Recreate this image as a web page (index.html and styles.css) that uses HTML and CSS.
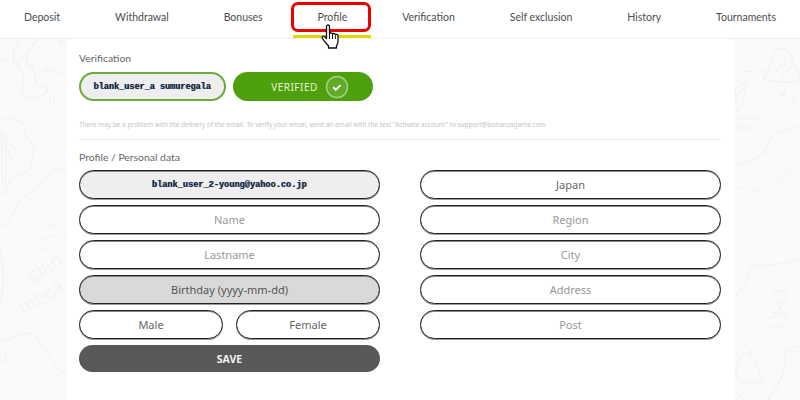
FILE: index.html
```html
<!DOCTYPE html>
<html lang="en">
<head>
<meta charset="utf-8">
<title>Profile</title>
<link rel="stylesheet" href="styles.css">
</head>
<body>
<nav class="tabs">
  <a class="tab">Deposit</a>
  <a class="tab">Withdrawal</a>
  <a class="tab">Bonuses</a>
  <a class="tab tab-active">Profile</a>
  <a class="tab">Verification</a>
  <a class="tab">Self exclusion</a>
  <a class="tab">History</a>
  <a class="tab">Tournaments</a>
</nav>
<div class="stage">
  <svg class="map map-left" width="70" height="362" viewBox="0 0 210 1086" aria-hidden="true">
    <g class="map-lines">
      <path d="M60 5C40 30 30 60 50 85C70 100 80 130 65 150C60 175 90 190 120 175C150 165 150 140 120 145C100 140 110 110 100 95C80 80 70 60 90 35C100 10 120 0 130 0"/>
      <ellipse cx="155" cy="187" rx="6" ry="14"/>
      <ellipse cx="186" cy="13" rx="9" ry="6"/>
      <rect x="63" y="45" width="15" height="15"/>
      <ellipse cx="150" cy="92" rx="12" ry="6"/>
      <path class="dash" d="M0 65L190 110"/>
      <path d="M0 250C30 230 50 240 55 255C70 250 85 270 70 290C100 310 110 340 95 360C100 410 50 410 30 420C25 450 15 470 0 470"/>
      <path d="M0 280L50 340M20 290L15 450M0 320L40 370M0 290L30 350M8 300L5 440"/>
      <path d="M0 570C40 550 40 500 70 480C100 460 130 420 160 395C180 390 190 400 210 395"/>
      <path d="M0 910C50 900 80 870 110 900C130 930 150 960 180 1000L210 1010"/>
      <path d="M0 960C10 980 20 970 15 945"/>
      <path d="M0 640C15 700 10 760 0 800"/>
      <path class="dash" d="M85 655L200 600M110 605L190 590M150 570L185 550"/>
    </g>
    <g class="map-text">
      <text x="95" y="735" transform="rotate(-30 95 735)">gian</text>
      <text x="70" y="830" transform="rotate(-30 70 830)">meca</text>
    </g>
  </svg>
  <svg class="map map-right" width="70" height="362" viewBox="0 0 210 1086" aria-hidden="true">
    <g class="map-lines">
      <path class="dash" d="M0 100L100 100"/>
      <path d="M100 125C120 90 130 60 135 40C150 20 190 40 185 70C200 90 210 110 210 125C180 140 140 130 100 125Z"/>
      <path d="M130 110L170 60M150 120L190 80"/>
      <path d="M145 155L170 180M170 155L145 180"/>
      <path class="dash" d="M185 170L210 215M210 360C190 400 150 440 80 458C50 460 30 450 0 430"/>
      <path d="M0 385C50 370 110 360 115 310C130 280 170 280 210 265"/>
      <path d="M20 220L15 150L50 130L35 200ZM15 180L40 150"/>
      <path d="M0 790C40 750 60 720 70 680C120 690 170 670 210 665"/>
      <path d="M135 775C130 755 170 750 170 775C165 790 155 790 152 815L175 825H130L148 815C150 795 145 785 135 775Z"/>
      <path class="dash" d="M0 880C30 890 60 930 65 950"/>
      <path d="M20 1020C10 980 40 930 60 950C80 970 85 1000 100 1030C70 1040 40 1035 20 1020Z"/>
      <path d="M115 1086C140 1040 170 1010 165 950C180 925 195 925 210 925"/>
      <path d="M15 1060L45 1085M45 1060L15 1085"/>
    </g>
    <g class="map-text map-text-small">
      <text x="14" y="245">rrocoas</text>
      <text x="14" y="275">oloos</text>
      <text x="112" y="842">ɔooɔɔs</text>
      <text x="112" y="872">ɔɔoos</text>
    </g>
  </svg>
  <main class="panel">
    <h2 class="label">Verification</h2>
    <div class="verify-row">
      <div class="pill pill-email"><span class="masked">blank_user_a sumuregala</span></div>
      <div class="verified">VERIFIED
        <svg class="check" width="24" height="24" viewBox="0 0 24 24"><circle cx="12" cy="12" r="10.500" fill="#5fab26" stroke="#a6cf8b" stroke-width="1.500"/><path d="M8.200 12.300l2.600 2.400 4.800-4.600" fill="none" stroke="#fff" stroke-width="2"/></svg>
      </div>
    </div>
    <p class="hint">There may be a problem with the delivery of the email. To verify your email, send an email with the text "Activate account" to support@bonanzagame.com</p>
    <h2 class="label label-profile">Profile / Personal data</h2>
    <div class="columns">
      <div class="col">
        <div class="pill pill-readonly"><span class="masked masked-long">blank_user_2-young@yahoo.co.jp</span></div>
        <div class="pill ph">Name</div>
        <div class="pill ph">Lastname</div>
        <div class="pill pill-date">Birthday (yyyy-mm-dd)</div>
        <div class="gender">
          <div class="pill val">Male</div>
          <div class="pill val">Female</div>
        </div>
        <div class="save">SAVE</div>
      </div>
      <div class="col">
        <div class="pill val">Japan</div>
        <div class="pill ph">Region</div>
        <div class="pill ph">City</div>
        <div class="pill ph">Address</div>
        <div class="pill ph">Post</div>
      </div>
    </div>
    <h2 class="label label-next">Change password</h2>
  </main>
</div>
<div class="marker"></div>
<svg class="hand" width="20" height="26" viewBox="0 0 20 26"><path d="M5.500 2.500c0-2 3-2 3 0v7.200c.6-1.200 2.800-1 3 .4.700-1 2.700-.7 2.900.6.800-.8 2.600-.3 2.600 1.300v5.500c0 2-.8 3-1.500 4.500v2H7.500v-2C5.500 19.500 3 17 1.500 14.500c-1-1.700.8-3 2.200-1.800l1.800 1.800z" fill="#fff" stroke="#111" stroke-width="1.300" stroke-linejoin="round"/><path d="M8.500 10v5M11.500 10.500v4.500M14.400 11.500v3.500" fill="none" stroke="#111"/></svg>
</body>
</html>
```
FILE: styles.css
```css
* { box-sizing: border-box; }
html, body { margin: 0; height: 400px; overflow: hidden; }
body {
  position: relative;
  font-family: "Noto Sans", sans-serif;
  background: #fff;
  color: #555;
}
.tabs {
  height: 39px;
  display: flex;
  justify-content: space-between;
  padding: 0 24px;
  border-bottom: 1px solid #f0f0f0;
  background: #fff;
}
.tab {
  position: relative;
  font-family: Lato, sans-serif;
  font-size: 10.500px;
  line-height: 35px;
  color: #4d4d4d;
  white-space: nowrap;
}
.tab-active::after {
  content: "";
  position: absolute;
  left: 50%;
  width: 78px;
  margin-left: -39px;
  top: 35px;
  height: 3px;
  background: #e3d800;
}
.stage {
  position: relative;
  height: 361px;
  background: #fafafa;
  padding: 0 66px 0 67px;
  overflow: hidden;
}
.map {
  position: absolute;
  top: -1px;
}
.map-left { left: 0; }
.map-right { right: 0; }
.map-lines {
  fill: none;
  stroke: #f3f3f3;
  stroke-width: 4;
}
.dash { stroke-dasharray: 26 14; }
.map-text {
  font-family: Lato, sans-serif;
  font-size: 62px;
  fill: #f4f4f4;
}
.map-text-small { font-size: 22px; }
.panel {
  position: relative;
  height: 361px;
  background: #fff;
  padding: 12px 13px 0 12px;
  overflow: hidden;
}
.label {
  margin: 0;
  font-family: Lato, sans-serif;
  font-size: 10.400px;
  font-weight: 400;
  line-height: 14px;
  color: #666;
}
.verify-row {
  display: flex;
  gap: 7px;
  margin-top: 7px;
}
.pill {
  height: 29px;
  flex: 1;
  display: flex;
  align-items: center;
  justify-content: center;
  border: 1px solid #222;
  border-radius: 15px;
  box-shadow: 0 1px 0 #999, inset 0 1px 0 #888;
  background: #fff;
  font-size: 11px;
}
.pill-email {
  flex: none;
  width: 147px;
  border: 2px solid #6cab3c;
  box-shadow: none;
  background: #eee;
}
.masked {
  font-family: "Liberation Mono", monospace;
  font-size: 8.500px;
  font-weight: 700;
  color: #1a2340;
  text-shadow: -.6px 0 #3f86d6, .6px 0 #d9a24a;
  filter: blur(.6px);
  white-space: nowrap;
}
.masked-long { font-size: 8.600px; }
.verified {
  width: 140px;
  height: 29px;
  display: flex;
  align-items: center;
  justify-content: center;
  gap: 7px;
  padding-left: 14px;
  border-radius: 15px;
  background: #4ea10c;
  color: #e6f2da;
  font-size: 10px;
  letter-spacing: .5px;
}
.check { flex: none; }
.hint {
  margin: 19px 0 0;
  font-size: 6.470px;
  line-height: 10px;
  color: #c4c4c4;
  white-space: nowrap;
  padding-bottom: 9px;
  border-bottom: 1px solid #eee;
}
.label-profile { margin-top: 10px; }
.columns {
  display: flex;
  justify-content: space-between;
  margin-top: 6px;
}
.col {
  width: 301px;
  display: flex;
  flex-direction: column;
  gap: 6px;
}
.col > .pill { flex: none; }
.ph { color: #999; }
.val { color: #666; }
.pill-readonly { background: #eee; }
.pill-date { background: #d9d9d9; color: #555; }
.gender {
  display: flex;
  gap: 13px;
}
.save {
  height: 27px;
  display: flex;
  align-items: center;
  justify-content: center;
  border-radius: 14px;
  background: #585858;
  color: #f2f2f2;
  font-size: 10.500px;
  font-weight: 700;
}
.label-next { margin-top: 25px; }
.marker {
  position: absolute;
  left: 291px;
  top: 2px;
  width: 80px;
  height: 30px;
  border: 3px solid #ee0000;
  border-radius: 7px;
}
.hand {
  position: absolute;
  left: 321px;
  top: 24px;
}
```
